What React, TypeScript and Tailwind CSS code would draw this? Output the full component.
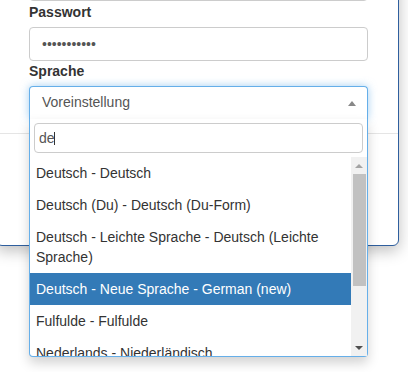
import React from 'react';

const options = [
    'Deutsch - Deutsch',
    'Deutsch (Du) - Deutsch (Du-Form)',
    'Deutsch - Leichte Sprache - Deutsch (Leichte Sprache)',
    'Deutsch - Neue Sprache - German (new)',
    'Fulfulde - Fulfulde',
    'Nederlands - Niederländisch',
];

const selectedIdx = 3;

export default function App() {
    return (
        <div className="relative h-[372px] w-[408px] overflow-hidden bg-white font-['Liberation_Sans',Arial,sans-serif] text-[14px] leading-[20px] text-[#333]">
            {/* modal */}
            <div className="-ml-[4px] -mt-[60px] w-[403px] rounded-[6px] border border-[#2f5f9e] bg-white shadow-[0_5px_15px_rgba(0,0,0,0.25)]">
                <div className="pb-[14px] pl-[32px] pr-[30px] pt-[26px]">
                    <div className="h-[34px] rounded-[4px] border border-[#ccc]" />

                    <label className="mb-[5px] mt-[1px] block font-bold">Passwort</label>
                    <input
                        type="password"
                        readOnly
                        value="xxxxxxxxxxx"
                        className="block h-[34px] w-full rounded-[4px] border border-[#ccc] px-[12px] text-[14px] text-[#555] outline-none"
                    />

                    <label className="mb-[5px] block font-bold">Sprache</label>
                    <div className="relative">
                        {/* select box (open) */}
                        <div className="relative h-[33px] rounded-t-[4px] border border-b-0 border-[#66afe9] bg-white px-[12px] pt-[5px] text-[#555] shadow-[0_0_8px_rgba(102,175,233,0.6)]">
                            Voreinstellung
                            <span className="absolute right-[11px] top-[14px] h-0 w-0 border-x-[4px] border-b-[5px] border-x-transparent border-b-[#888]" />
                        </div>

                        {/* dropdown */}
                        <div className="absolute left-0 top-full z-10 w-full rounded-b-[4px] border border-t-0 border-[#66afe9] bg-white shadow-[0_6px_12px_rgba(0,0,0,0.175)]">
                            <div className="p-[4px]">
                                <div className="flex h-[30px] items-center rounded-[4px] border border-[#ccc] px-[4px] text-[#555]">
                                    de
                                    <span className="ml-[-1px] h-[13px] w-px bg-[#333]" />
                                </div>
                            </div>
                            <div className="flex h-[199px] overflow-hidden">
                                <ul className="flex-1 overflow-hidden">
                                    {options.map((o, i) => (
                                        <li
                                            key={o}
                                            className={
                                                i === selectedIdx
                                                    ? 'bg-[#337ab7] px-[6px] py-[6px] text-white'
                                                    : 'px-[6px] py-[6px] text-[#333]'
                                            }
                                        >
                                            {o}
                                        </li>
                                    ))}
                                </ul>
                                {/* scrollbar */}
                                <div className="flex w-[16px] flex-col bg-[#f1f1f1]">
                                    <div className="flex h-[17px] items-center justify-center">
                                        <span className="h-0 w-0 border-x-[4px] border-b-[4px] border-x-transparent border-b-[#a3a3a3]" />
                                    </div>
                                    <div className="ml-[2px] h-[112px] w-[13px] bg-[#c1c1c1]" />
                                    <div className="flex-1" />
                                    <div className="flex h-[17px] items-center justify-center">
                                        <span className="h-0 w-0 border-x-[4px] border-t-[4px] border-x-transparent border-t-[#505050]" />
                                    </div>
                                </div>
                            </div>
                        </div>
                    </div>
                </div>

                {/* footer */}
                <div className="h-[112px] border-t border-[#e5e5e5]" />
            </div>
        </div>
    );
}
